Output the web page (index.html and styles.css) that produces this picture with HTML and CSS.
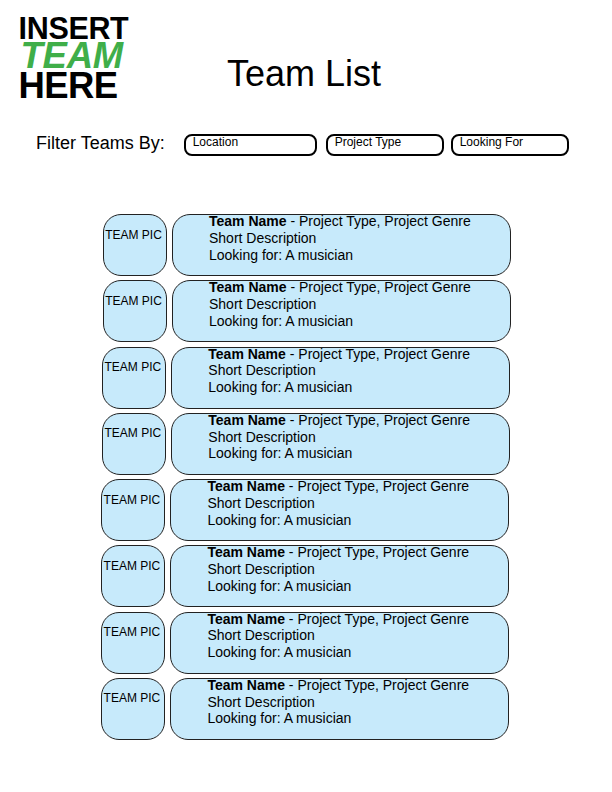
FILE: index.html
```html
<!DOCTYPE html>
<html lang="en">
<head>
<meta charset="utf-8">
<title>Team List</title>
<link rel="stylesheet" href="styles.css">
</head>
<body>
<header class="header">
  <div class="logo">
    <div class="logo-insert">INSERT</div>
    <div class="logo-team">TEAM</div>
    <div class="logo-here">HERE</div>
  </div>
  <h1 class="title">Team List</h1>
</header>
<nav class="filters">
  <span class="filter-label">Filter Teams By:</span>
  <button class="filter filter-wide"><span>Location</span></button>
  <button class="filter"><span>Project Type</span></button>
  <button class="filter"><span>Looking For</span></button>
</nav>
<main class="teams">
  <article class="team"><div class="pic">TEAM PIC</div><div class="card"><p><b>Team Name</b> - Project Type, Project Genre</p><p>Short Description</p><p>Looking for: A musician</p></div></article>
  <article class="team"><div class="pic">TEAM PIC</div><div class="card"><p><b>Team Name</b> - Project Type, Project Genre</p><p>Short Description</p><p>Looking for: A musician</p></div></article>
  <article class="team"><div class="pic">TEAM PIC</div><div class="card"><p><b>Team Name</b> - Project Type, Project Genre</p><p>Short Description</p><p>Looking for: A musician</p></div></article>
  <article class="team"><div class="pic">TEAM PIC</div><div class="card"><p><b>Team Name</b> - Project Type, Project Genre</p><p>Short Description</p><p>Looking for: A musician</p></div></article>
  <article class="team"><div class="pic">TEAM PIC</div><div class="card"><p><b>Team Name</b> - Project Type, Project Genre</p><p>Short Description</p><p>Looking for: A musician</p></div></article>
  <article class="team"><div class="pic">TEAM PIC</div><div class="card"><p><b>Team Name</b> - Project Type, Project Genre</p><p>Short Description</p><p>Looking for: A musician</p></div></article>
  <article class="team"><div class="pic">TEAM PIC</div><div class="card"><p><b>Team Name</b> - Project Type, Project Genre</p><p>Short Description</p><p>Looking for: A musician</p></div></article>
  <article class="team"><div class="pic">TEAM PIC</div><div class="card"><p><b>Team Name</b> - Project Type, Project Genre</p><p>Short Description</p><p>Looking for: A musician</p></div></article>
</main>
</body>
</html>
```

FILE: styles.css
```css
* {
  box-sizing: border-box;
}

body {
  margin: 0;
  width: 612px;
  height: 792px;
  overflow: hidden;
  background: #fff;
  color: #000;
  font-family: "Liberation Sans", Arial, sans-serif;
  white-space: nowrap;
}

.header {
  display: flex;
  height: 134px;
}

.logo {
  width: 227px;
  padding: 11px 0 0 18.6px;
  font-weight: bold;
}

.logo-insert {
  height: 28px;
  font-size: 30.5px;
  line-height: 34px;
  letter-spacing: -0.35px;
}

.logo-team {
  height: 30px;
  padding-left: 2px;
  color: #3fae49;
  font-size: 36.5px;
  font-style: italic;
  line-height: 34px;
  letter-spacing: -0.3px;
}

.logo-here {
  font-size: 36.5px;
  line-height: 34px;
  letter-spacing: -0.6px;
}

.title {
  margin: 53px 0 0;
  font-size: 36px;
  font-weight: normal;
  line-height: 42px;
}

.filters {
  display: flex;
  height: 80px;
}

.filter-label {
  width: 148px;
  margin-left: 36px;
  font-size: 18px;
  line-height: 18px;
}

.filter {
  width: 118px;
  height: 22px;
  margin: 0 7px 0 0;
  padding: 0 0 0 6.7px;
  display: flex;
  align-items: flex-start;
  border: 2px solid #000;
  border-radius: 8px;
  background: #fff;
  color: #000;
  font: 12px/13px "Liberation Sans", Arial, sans-serif;
}

.filter-wide {
  width: 133px;
  margin-right: 9px;
}

.teams {
  display: grid;
  grid-auto-rows: 62px;
  row-gap: 4.28px;
}

.team {
  display: flex;
  gap: 5px;
  margin-left: 103px;
}

.team:nth-child(n + 3) {
  margin-left: 102.3px;
}

.team:nth-child(n + 5) {
  margin-left: 101.4px;
}

.pic,
.card {
  border: 1px solid #222;
  border-radius: 18px;
  background: #c7eafb;
}

.pic {
  width: 64px;
  padding: 12.6px 0 0 1.2px;
  font-size: 12px;
  line-height: 14px;
}

.card {
  width: 339px;
  padding-left: 36px;
  font-size: 14px;
  line-height: 16.8px;
}

.card p {
  margin: 0;
}

.card p:first-child {
  margin-top: -2px;
}
```
